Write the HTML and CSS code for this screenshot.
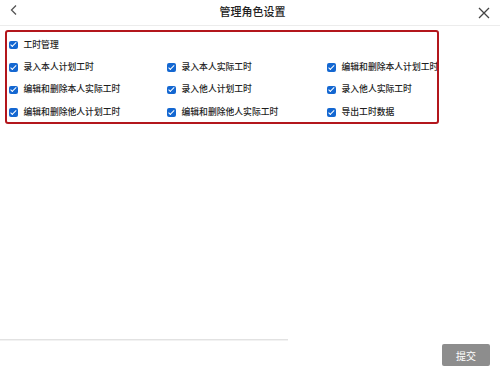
FILE: index.html
```html
<!DOCTYPE html>
<html lang="zh">
<head>
<meta charset="utf-8">
<link rel="stylesheet" href="styles.css">
</head>
<body>
<div class="page">
  <header class="header">
    <svg class="back" width="10" height="12" viewBox="0 0 10 12"><path d="M7 1.5 L2.5 6 L7 10.5" fill="none" stroke="#555" stroke-width="1.3"/></svg>
    <div class="title">管理角色设置</div>
    <svg class="close" width="12" height="12" viewBox="0 0 12 12"><path d="M1 1 L11 11 M11 1 L1 11" fill="none" stroke="#444" stroke-width="1.3"/></svg>
  </header>
  <section class="box">
    <div class="row-top">
      <label class="item"><span class="cb"></span><span>工时管理</span></label>
    </div>
    <div class="grid">
      <label class="item"><span class="cb"></span><span>录入本人计划工时</span></label>
      <label class="item"><span class="cb"></span><span>录入本人实际工时</span></label>
      <label class="item"><span class="cb"></span><span>编辑和删除本人计划工时</span></label>
      <label class="item"><span class="cb"></span><span>编辑和删除本人实际工时</span></label>
      <label class="item"><span class="cb"></span><span>录入他人计划工时</span></label>
      <label class="item"><span class="cb"></span><span>录入他人实际工时</span></label>
      <label class="item"><span class="cb"></span><span>编辑和删除他人计划工时</span></label>
      <label class="item"><span class="cb"></span><span>编辑和删除他人实际工时</span></label>
      <label class="item"><span class="cb"></span><span>导出工时数据</span></label>
    </div>
  </section>
  <div class="spacer"></div>
  <footer class="footer">
    <div class="footline"></div>
    <button class="submit">提交</button>
  </footer>
</div>
</body>
</html>
```
FILE: styles.css
```css
* { box-sizing: border-box; }
html, body { margin: 0; padding: 0; background: #fff; }
body {
  font-family: "Noto Sans CJK SC", "Noto Sans", sans-serif;
  color: #222;
}
.page {
  width: 500px;
  height: 375px;
  display: flex;
  flex-direction: column;
  overflow: hidden;
}
.header {
  height: 26px;
  flex: none;
  display: flex;
  align-items: center;
  justify-content: space-between;
  padding: 0 10px 2px 9px;
  border-bottom: 1px solid #ececec;
}
.back { margin-top: -3px; }
.title {
  font-size: 11px;
  font-weight: 500;
  color: #222;
  margin-left: 8px;
  margin-top: -2px;
}
.close { margin-top: 2px; }
.box {
  margin: 4px 0 0 5px;
  width: 434px;
  height: 94px;
  border: 2px solid #b3161c;
  border-radius: 3px;
  padding: 2px 0 0 2px;
  overflow: hidden;
}
.row-top { height: 22px; display: flex; align-items: center; }
.grid {
  display: grid;
  grid-template-columns: 158px 160px 120px;
  grid-auto-rows: 22.5px;
}
.item {
  display: flex;
  align-items: center;
  gap: 6px;
  font-size: 8.8px;
  font-weight: 500;
  color: #1e1e1e;
  white-space: nowrap;
  line-height: 1;
}
.cb {
  width: 8.5px;
  height: 8.5px;
  border-radius: 2px;
  background: #1467d1;
  flex: none;
  position: relative;
}
.cb::after {
  content: "";
  position: absolute;
  left: 2.5px;
  top: 0.7px;
  width: 2.3px;
  height: 4.6px;
  border: solid #fff;
  border-width: 0 1.2px 1.2px 0;
  transform: rotate(45deg);
}
.spacer { flex: 1; }
.footer {
  height: 36px;
  flex: none;
  display: flex;
  align-items: flex-start;
  position: relative;
}
.footline {
  width: 288px;
  height: 2px;
  background: #e2e2e2;
  border-bottom: 1px solid #f2f2f2;
  margin-top: 0;
}
.submit {
  margin: 5px 0 0 154px;
  width: 48px;
  height: 22px;
  background: #8d8d8d;
  color: #fff;
  border: none;
  border-radius: 2px;
  font-family: "Noto Sans CJK SC", sans-serif;
  font-size: 10px;
  padding: 0;
}
```
